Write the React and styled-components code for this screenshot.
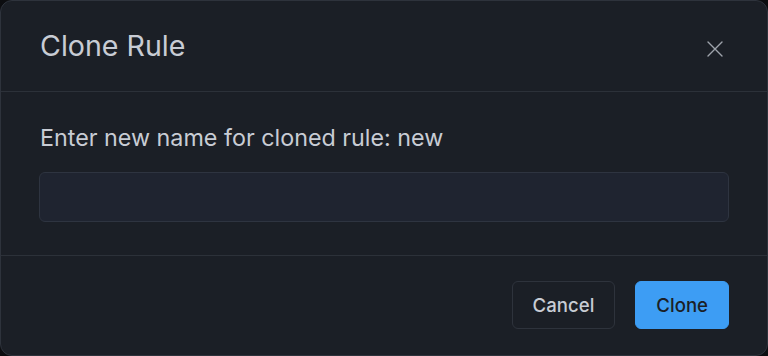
import React, { useState } from 'react';
import styled, { createGlobalStyle } from 'styled-components';

const Global = createGlobalStyle`
    html, body {
        margin: 0;
        padding: 0;
        background: #0c0d10;
    }
    * {
        box-sizing: border-box;
    }
`;

const Dialog = styled.div`
    width: 768px;
    height: 356px;
    background: #1b1f26;
    border: 1px solid #2e333c;
    border-radius: 12px;
    display: flex;
    flex-direction: column;
    font-family: Inter, "Noto Sans", sans-serif;
    color: #c8ccd4;
    overflow: hidden;
`;

const Header = styled.div`
    height: 91px;
    padding: 0 40px 0 39px;
    display: flex;
    align-items: center;
    justify-content: space-between;
    border-bottom: 1px solid #2c3139;
`;

const Title = styled.h2`
    margin: 0;
    font-size: 28.6px;
    line-height: 34px;
    font-weight: 400;
    color: #c8ccd4;
`;

const CloseButton = styled.button`
    width: 24px;
    height: 24px;
    margin-top: 5px;
    padding: 0;
    border: none;
    background: transparent;
    display: flex;
    align-items: center;
    justify-content: center;
    cursor: pointer;
`;

const Body = styled.div`
    padding: 32px 38px 33px 38px;
    border-bottom: 1px solid #2c3139;
`;

const Label = styled.label`
    display: block;
    padding-left: 1px;
    font-size: 23.3px;
    line-height: 28px;
    color: #c8ccd4;
    margin-bottom: 20px;
`;

const Input = styled.input`
    display: block;
    width: 100%;
    height: 50px;
    background: #1f2430;
    border: 1px solid #2e3440;
    border-radius: 6px;
    padding: 0 12px;
    font-family: inherit;
    font-size: 20px;
    color: #c8ccd4;
    outline: none;
`;

const Footer = styled.div`
    flex: 1;
    padding: 25px 38px 0 40px;
    display: flex;
    justify-content: flex-end;
    align-items: flex-start;
    gap: 20px;
`;

const Button = styled.button`
    height: 48px;
    padding: 0 20px;
    border-radius: 6px;
    font-family: inherit;
    font-size: 18.6px;
    font-weight: 500;
    cursor: pointer;
    border: 1px solid ${props => props.primary ? '#3d9df4' : '#2e333c'};
    background: ${props => props.primary ? '#3d9df4' : 'transparent'};
    color: ${props => props.primary ? '#1b1f26' : '#c8ccd4'};
`;

export default function App() {
    const [name, setName] = useState('');
    return (
        <>
            <Global />
            <Dialog>
                <Header>
                    <Title>Clone Rule</Title>
                    <CloseButton aria-label="Close">
                        <svg width="16" height="16" viewBox="0 0 16 16">
                            <path d="M1 1L15 15M15 1L1 15" stroke="#9ea3ab" strokeWidth="1.4" strokeLinecap="round" />
                        </svg>
                    </CloseButton>
                </Header>
                <Body>
                    <Label>Enter new name for cloned rule: new</Label>
                    <Input value={name} onChange={e => setName(e.target.value)} />
                </Body>
                <Footer>
                    <Button>Cancel</Button>
                    <Button primary>Clone</Button>
                </Footer>
            </Dialog>
        </>
    );
}
